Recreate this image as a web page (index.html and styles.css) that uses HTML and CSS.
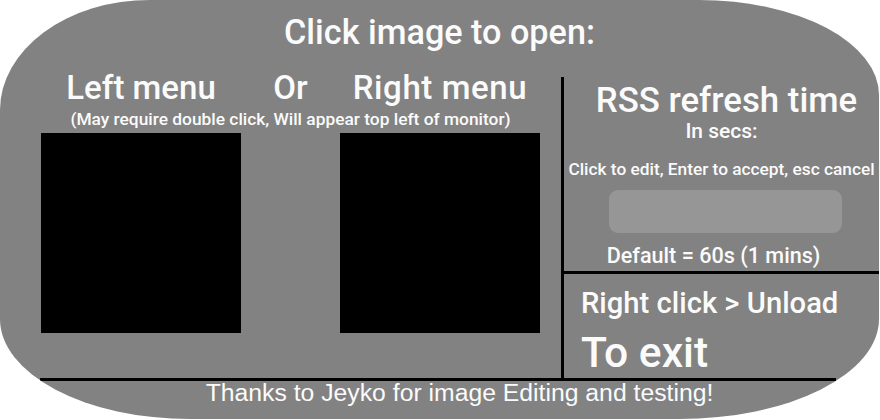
FILE: index.html
```html
<!DOCTYPE html>
<html lang="en">
<head>
<meta charset="utf-8">
<title>Menu launcher</title>
<link rel="stylesheet" href="styles.css">
</head>
<body>
<div class="panel">
  <h1 class="title">Click image to open:</h1>
  <div class="main">
    <section class="menus">
      <div class="menu-grid">
        <h2 class="menu-label">Left menu</h2>
        <h2 class="menu-label">Or</h2>
        <h2 class="menu-label menu-label-wide">Right menu</h2>
        <p class="note">(May require double click, Will appear top left of monitor)</p>
        <div class="thumb"></div>
        <div class="spacer"></div>
        <div class="thumb"></div>
      </div>
    </section>
    <div class="divider"></div>
    <section class="side">
      <div class="rss">
        <h2 class="rss-title">RSS refresh time</h2>
        <p class="rss-unit">In secs:</p>
        <p class="rss-help">Click to edit, Enter to accept, esc cancel</p>
        <div class="rss-input"></div>
        <p class="rss-default">Default = 60s (1 mins)</p>
      </div>
      <div class="exit">
        <p class="exit-hint">Right click &gt; Unload</p>
        <p class="exit-title">To exit</p>
      </div>
    </section>
  </div>
  <div class="rule"></div>
  <p class="credits">Thanks to Jeyko for image Editing and testing!</p>
</div>
</body>
</html>
```
FILE: styles.css
```css
* { box-sizing: border-box; }
html, body { margin: 0; padding: 0; background: #ffffff; }
body { width: 880px; height: 420px; font-family: Roboto, "Open Sans", sans-serif; font-weight: 500; color: #fbfbfb; }
h1, h2, p { margin: 0; font-weight: 500; }

.panel {
  width: 879px;
  height: 419px;
  background: #828282;
  border-radius: 150px 180px 200px 190px / 110px 95px 100px 100px;
  display: flex;
  flex-direction: column;
  overflow: hidden;
}

.title {
  height: 66px;
  padding-top: 14.5px;
  font-size: 34.2px;
  line-height: 34.2px;
  text-align: center;
}

.main {
  height: 312px;
  display: flex;
}

.menus {
  width: 561px;
  padding: 5px 0 0 41px;
}

.menu-grid {
  display: grid;
  grid-template-columns: 200px 99px 200px;
}

.menu-label {
  font-size: 33px;
  line-height: 33px;
  text-align: center;
  white-space: nowrap;
}

.menu-label-wide { letter-spacing: 0.6px; }

.note {
  grid-column: 1 / 4;
  margin-top: 7.3px;
  font-size: 17.35px;
  line-height: 17.35px;
  text-align: center;
  white-space: nowrap;
}

.thumb {
  margin-top: 4.3px;
  width: 200px;
  height: 200px;
  background: #000;
}

.divider {
  width: 3px;
  margin-top: 11px;
  background: #000;
}

.side {
  width: 315px;
  display: flex;
  flex-direction: column;
}

.rss {
  height: 208px;
  padding-top: 17px;
  border-bottom: 3px solid #000;
  display: flex;
  flex-direction: column;
  align-items: center;
}

.rss-title { margin-left: 10px; font-size: 34.8px; line-height: 34.8px; white-space: nowrap; }
.rss-unit { margin-top: 3px; font-size: 21px; line-height: 21px; }
.rss-help { margin-top: 18.8px; font-size: 17.3px; line-height: 17.3px; white-space: nowrap; }
.rss-input {
  margin-top: 12.2px;
  margin-left: 8px;
  width: 233px;
  height: 43px;
  border-radius: 9px;
  background: #969696;
}
.rss-default { margin-top: 12.2px; margin-right: 16px; font-size: 21.6px; line-height: 21.6px; white-space: nowrap; }

.exit {
  padding: 14.6px 0 0 17px;
}
.exit-hint { font-size: 29.2px; line-height: 29.2px; }
.exit-title { margin-top: 13.2px; font-size: 42.6px; line-height: 42.6px; font-weight: 500; }

.rule {
  margin-left: 40px;
  width: 796px;
  height: 3px;
  background: #000;
}

.credits {
  padding-left: 40px;
  font-family: "Liberation Sans", Arial, sans-serif;
  font-weight: 400;
  font-size: 24.75px;
  line-height: 24.75px;
  text-align: center;
  white-space: nowrap;
}
```
